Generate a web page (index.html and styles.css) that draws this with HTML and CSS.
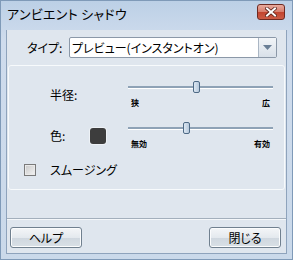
FILE: index.html
```html
<!DOCTYPE html>
<html lang="ja">
<head>
  <meta charset="UTF-8" />
  <title>アンビエント シャドウ</title>
  <link rel="stylesheet" href="styles.css">
</head>
<body>

<div class="window">
  <div class="titlebar">
    <span class="title">アンビエント シャドウ</span>
    <button class="close" type="button">
      <svg width="12" height="10" viewBox="0 0 12 10">
        <path d="M2 1.5 L10 8.5 M10 1.5 L2 8.5" stroke="#5a2018" stroke-width="3.6" stroke-linecap="square"/>
        <path d="M2 1.5 L10 8.5 M10 1.5 L2 8.5" stroke="#fff" stroke-width="2" stroke-linecap="square"/>
      </svg>
    </button>
  </div>

  <div class="client">
    <div class="type-row">
      <label class="type-label">タイプ:</label>
      <div class="combo">
        <span class="combo-text">プレビュー(インスタントオン)</span>
        <span class="combo-arrow">
          <svg width="9" height="5" viewBox="0 0 9 5"><path d="M0 0 H9 L4.5 5 Z" fill="#6a7f96"/></svg>
        </span>
      </div>
    </div>

    <div class="group">
      <div class="row row-radius">
        <span class="lbl">半径:</span>
        <span class="cell"></span>
        <div class="slider">
          <div class="track"><span class="thumb" style="left: 65px"></span></div>
          <div class="ticks"><span>狭</span><span>広</span></div>
        </div>
      </div>

      <div class="row row-color">
        <span class="lbl">色:</span>
        <span class="cell"><span class="swatch"></span></span>
        <div class="slider">
          <div class="track"><span class="thumb" style="left: 55px"></span></div>
          <div class="ticks"><span>無効</span><span>有効</span></div>
        </div>
      </div>

      <div class="check-row">
        <span class="checkbox"></span>
        <span class="check-label">スムージング</span>
      </div>
    </div>

    <div class="separator"></div>

    <div class="buttons">
      <button type="button" class="btn">ヘルプ</button>
      <button type="button" class="btn">閉じる</button>
    </div>
  </div>
</div>

</body>
</html>
```

FILE: styles.css
```css
body {
  margin: 0;
  font-family: "Noto Sans CJK JP", "Noto Sans", sans-serif;
  font-size: 12px;
  font-feature-settings: "palt";
  color: #000;
}
.window {
  width: 293px;
  height: 260px;
  box-sizing: border-box;
  border: 1px solid #7f9ab8;
  background: linear-gradient(#bcd0e6, #cfdced 40px, #cad9ea);
  display: flex;
  flex-direction: column;
}
.titlebar {
  height: 29px;
  display: flex;
  align-items: flex-start;
  justify-content: space-between;
}
.title {
  margin: 4px 0 0 6px;
  font-size: 13px;
  line-height: 18px;
  letter-spacing: 0.3px;
}
.close {
  width: 28px;
  height: 16px;
  margin: 3px 7px 0 0;
  padding: 0;
  border: 1px solid #6e2a22;
  border-radius: 3px;
  background: linear-gradient(#e8aa9d, #d77d6c 50%, #c2442f 51%, #cc5c46);
  display: flex;
  align-items: center;
  justify-content: center;
}
.client {
  flex: 1;
  margin: 0 5px 5px;
  border: 1px solid #8ea3bc;
  border-top: none;
  background: #dfe6ee;
  display: flex;
  flex-direction: column;
}

/* type */
.type-row {
  display: flex;
  align-items: center;
  margin-top: 7px;
  height: 21px;
}
.type-label {
  width: 42px;
  padding-left: 20px;
}
.combo {
  width: 208px;
  height: 21px;
  box-sizing: border-box;
  border: 1px solid #8b98a8;
  border-radius: 2px;
  background: #fff;
  display: flex;
  align-items: center;
}
.combo-text {
  flex: 1;
  padding-left: 2px;
  line-height: 19px;
}
.combo-arrow {
  width: 17px;
  height: 19px;
  border-left: 1px solid #aab6c4;
  background: linear-gradient(#f2f5f8, #d8e0e9);
  display: flex;
  align-items: center;
  justify-content: center;
}

/* group */
.group {
  margin: 7px 1px 0;
  height: 125px;
  box-sizing: border-box;
  border: 1px solid #f7fafc;
  border-radius: 3px;
  display: flex;
  flex-direction: column;
}
.row {
  display: flex;
  align-items: center;
  padding-left: 41px;
}
.row-radius {
  margin-top: 15px;
}
.row-color {
  margin-top: 14px;
}
.lbl {
  width: 40px;
  font-size: 12px;
}
.cell {
  width: 38px;
}
.swatch {
  display: block;
  width: 16px;
  height: 16px;
  box-sizing: border-box;
  border-radius: 3px;
  background: #3d3d3d;
  box-shadow: 0 0 0 1px #eef2f6;
}
.slider {
  width: 145px;
}
.track {
  position: relative;
  height: 13px;
  background: linear-gradient(transparent 5px, #8ea2b6 5px, #8ea2b6 7px, #ffffff 7px, #ffffff 8px, transparent 8px);
}
.thumb {
  position: absolute;
  top: 0;
  width: 7px;
  height: 12px;
  box-sizing: border-box;
  border: 1px solid #4e6a86;
  border-radius: 2px;
  background: linear-gradient(90deg, #dce7f2, #b7c9dc);
}
.ticks {
  display: flex;
  justify-content: space-between;
  margin-top: 4px;
  padding: 0 3px;
  font-size: 8px;
  font-weight: bold;
  line-height: 10px;
}

.check-row {
  display: flex;
  align-items: center;
  margin-top: 12px;
  padding-left: 15px;
}
.checkbox {
  width: 12px;
  height: 12px;
  box-sizing: border-box;
  border: 1px solid #7a7a7a;
  background: linear-gradient(135deg, #c8c8c8, #f4f4f4);
  box-shadow: inset 0 0 0 1px #eaeaea;
  margin-right: 14px;
}

.separator {
  margin-top: 28px;
  border-top: 1px solid #a3afbc;
  border-bottom: 1px solid #f4f7fa;
}
.buttons {
  display: flex;
  justify-content: space-between;
  margin-top: 7px;
  padding: 0 5px 0 3px;
}
.btn {
  width: 72px;
  height: 21px;
  padding: 0;
  font: inherit;
  border: 1px solid #70808f;
  border-radius: 3px;
  background: linear-gradient(#f4f6f8, #e4e9ee 50%, #cfd7df 51%, #d9e0e6);
  box-shadow: inset 0 0 0 1px #fbfcfd;
}
```
